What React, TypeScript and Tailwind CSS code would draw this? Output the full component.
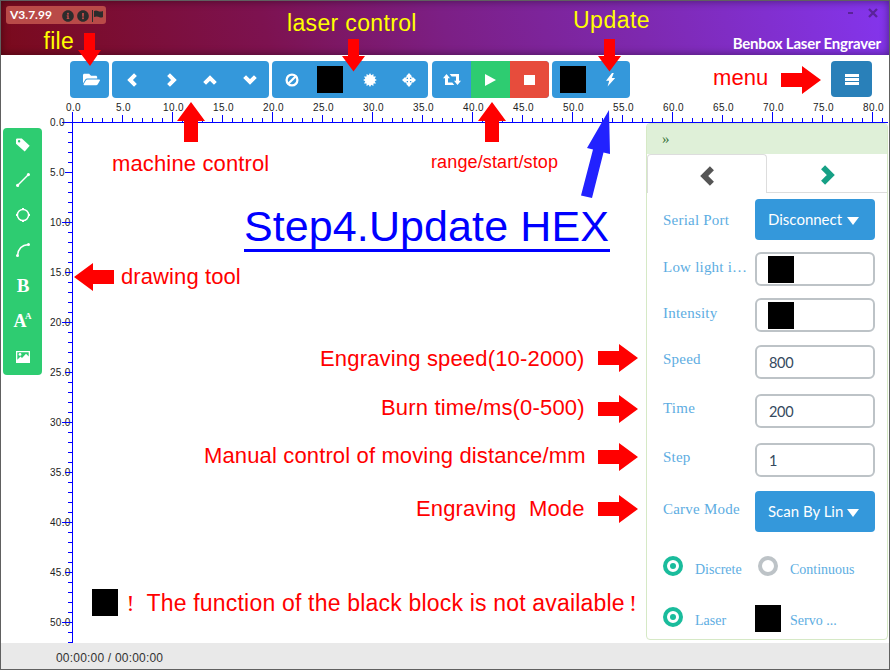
import React from 'react';
import { FaFolderOpen, FaInfoCircle, FaExclamationCircle } from 'react-icons/fa';

const majors = Array.from({ length: 17 }, (_, i) => i * 5);
const vMajors = Array.from({ length: 11 }, (_, i) => i * 5);

function Group({ children, className = '' }: { children: React.ReactNode; className?: string }) {
  return <div className={`flex h-[37px] overflow-hidden rounded-[4px] bg-[#3498db] ${className}`}>{children}</div>;
}
function Btn({ children, className = '' }: { children: React.ReactNode; className?: string }) {
  return <button className={`flex h-[37px] w-[39px] items-center justify-center text-white ${className}`}>{children}</button>;
}
const Block = () => <span className="block h-[27px] w-[26px] shrink-0 bg-black" />;

// One heavy chevron, turned clockwise by `turn` degrees from pointing left.
const Chevron = ({ turn, w = 14 }: { turn: number; w?: number }) => (
  <svg width={w} height={w} viewBox="0 0 13 13" fill="none" stroke="currentColor" strokeWidth="3.7">
    <path d="M9.700 1.500 4.700 6.500l5 5" transform={`rotate(${turn} 6.5 6.5)`} />
  </svg>
);

const Burst = () => (
  <svg width="14" height="14" viewBox="-7 -7 14 14" fill="#fff">
    <polygon points={Array.from({ length: 24 }, (_, i) => {
      const a = (i * Math.PI) / 12;
      const r = i % 2 ? 4.9 : 6.9;
      return `${(Math.sin(a) * r).toFixed(2)},${(-Math.cos(a) * r).toFixed(2)}`;
    }).join(' ')} />
  </svg>
);
const Ban = () => (
  <svg width="14" height="14" viewBox="-7 -7 14 14" fill="none" stroke="#fff" strokeWidth="2.300">
    <circle r="5.400" /><path d="M-3.800 3.800 3.800-3.800" />
  </svg>
);
const Target = () => (
  <svg width="14" height="14" viewBox="-7 -7 14 14">
    <g fill="#fff">
      <path d="M0-7 3.200-3.600H-3.200ZM0 7 3.200 3.600H-3.200ZM-7 0-3.600-3.200V3.200ZM7 0 3.600-3.200V3.200Z" />
      <path d="M0-5.800 5.800 0 0 5.800-5.800 0Z" />
    </g>
    <g fill="#3498db">
      <path d="M-2.300-2.300h1.300v1.300h-1.300zM1-2.300h1.300v1.300H1zM-2.300 1h1.300v1.300h-1.300zM1 1h1.300v1.300H1z" />
    </g>
  </svg>
);
const Repeat = () => (
  <svg width="18" height="11" viewBox="0 0 18 11" fill="#fff">
    <path d="M0 4.300 3.500 0 7 4.300H5V8.400h4.300l2 2.600H2V4.300ZM18 6.700 14.500 11 11 6.700h2V2.600H8.700L6.700 0H16v6.700Z" />
  </svg>
);
const Bolt = () => (
  <svg width="11" height="14" viewBox="0 0 11 14" fill="#fff"><path d="M7 0 1 7.800h3.200L2.600 13.500 10.200 5H6.800L8.800 0z" /></svg>
);
const TextSize = () => (
  <span className="flex items-start font-['Liberation_Serif',serif] font-bold leading-none">
    <span className="text-[18px] tracking-[-1.500px]">A</span><span className="text-[9px]">A</span>
  </span>
);
const Picture = () => (
  <svg width="14" height="12" viewBox="0 0 14 12" className="mt-[2px]">
    <path fill="#fff" fillRule="evenodd" d="M0 0h14v12H0ZM1.300 1.300v7.500L4.500 5.500 6 7l4-4.200 2.700 2.800V1.300Z" />
    <circle cx="4" cy="3.400" r="1.400" fill="#fff" />
  </svg>
);
const toolIcons = [
  <svg width="14" height="14" viewBox="0 0 14 14"><path fill="#fff" fillRule="evenodd" d="M.8.500H5.800l7.900 7.300-5 5.700L0 5.800V1.300ZM3.100 2a1.200 1.200 0 1 0 .01 2.400A1.200 1.200 0 0 0 3.100 2Z" /></svg>,
  <svg width="14" height="14" viewBox="0 0 14 14" stroke="#fff" strokeWidth="1.400" fill="#fff"><path d="M1.500 12.500l11-11" /><circle cx="1.600" cy="12.400" r=".9" /><circle cx="12.400" cy="1.600" r=".9" /></svg>,
  <svg width="14" height="14" viewBox="0 0 14 14" stroke="#fff" fill="none"><circle cx="7" cy="7" r="5.600" strokeWidth="1.500" /><path d="M7 0v2M7 12v2M0 7h2M12 7h2" strokeWidth="2" /></svg>,
  <svg width="14" height="14" viewBox="0 0 14 14" stroke="#fff" fill="none" strokeWidth="1.400"><path d="M1.500 12.500C2 6 6 2 12.500 1.500" /><circle cx="1.500" cy="12.500" r=".8" /><circle cx="12.500" cy="1.500" r=".8" /></svg>,
  <span className="font-['Liberation_Serif',serif] text-[19px] font-bold leading-none tracking-[-1px]">B</span>,
  <TextSize />,
  <Picture />,
];

const Label = ({ children, className = '' }: { children: React.ReactNode; className?: string }) => (
  <span className={`block w-[92px] shrink-0 whitespace-nowrap font-['Liberation_Serif',serif] text-[15px] leading-5 tracking-[0.22px] text-[#5dade2] ${className}`}>{children}</span>
);
const Option = ({ children, className = '' }: { children: React.ReactNode; className?: string }) => (
  <span className={`block shrink-0 whitespace-nowrap font-['Liberation_Serif',serif] text-[14px] leading-5 text-[#5dade2] ${className}`}>{children}</span>
);
function Select({ text }: { text: string }) {
  return (
    <button className="flex h-[41px] w-[120px] items-center justify-between rounded-[4px] bg-[#3498db] pl-[13px] pr-4 font-[Lato,sans-serif] text-[15px] text-white">
      <span className="whitespace-nowrap">{text}</span>
      <svg width="12" height="8" viewBox="0 0 12 8" fill="#fff" className="mt-0.5"><path d="M0 0h12L6 8z" /></svg>
    </button>
  );
}
function Field({ value }: { value?: string }) {
  return (
    <div className="flex h-[34px] w-[120px] items-center rounded-[6px] border-2 border-[#bdc3c7] pl-[11px] font-[Lato,sans-serif] text-[14.500px] tracking-[-0.3px] text-[#34495e]">
      {value === undefined ? <Block /> : <span className="pl-px pt-px">{value}</span>}
    </div>
  );
}
function Radio({ on = false }: { on?: boolean }) {
  return on ? (
    <span className="flex size-5 shrink-0 items-center justify-center rounded-full border-4 border-[#1abc9c]"><span className="size-[6px] rounded-full bg-[#1abc9c]" /></span>
  ) : <span className="block size-5 shrink-0 rounded-full border-4 border-[#bdc3c7]" />;
}

function HRuler() {
  return (
    <div className="relative h-[25px] shrink-0">
      <svg width="888" height="25" className="absolute left-0 top-0" shapeRendering="crispEdges">
        <path d="M61 24.500H887" stroke="#0000ff" />
        {Array.from({ length: 82 }, (_, i) => (
          <rect key={i} x={71 + i * 10} y={i % 10 === 0 ? 14 : i % 5 === 0 ? 17 : 20} width="1" height={i % 10 === 0 ? 10 : i % 5 === 0 ? 7 : 4} fill="#0000ff" />
        ))}
      </svg>
      {majors.map((n) => (
        <span key={n} style={{ left: 52.5 + n * 10 }} className="absolute top-[4px] w-10 text-center font-['Liberation_Sans',Arial,sans-serif] text-[10px] leading-3 tracking-[0.4px] text-[#222]">{n.toFixed(1)}</span>
      ))}
    </div>
  );
}

function VRuler() {
  return (
    <div className="relative h-[520px] w-[31px]">
      {vMajors.map((n) => (
        <span key={n} style={{ top: n * 10 - 6 }} className="absolute left-[8px] font-['Liberation_Sans',Arial,sans-serif] text-[10px] leading-3 tracking-[0.3px] text-[#222]">{n.toFixed(1)}</span>
      ))}
      <svg width="31" height="520" className="absolute left-0 top-0" shapeRendering="crispEdges" fill="#0000ff">
        <rect x="30" y="0" width="1" height="520" />
        {Array.from({ length: 52 }, (_, k) => k + 1).map((i) => {
          const w = i % 10 === 0 ? 10 : i % 5 === 0 ? 7 : 4;
          return <rect key={i} x={30 - w} y={i * 10 - 1} width={w} height="1" />;
        })}
      </svg>
    </div>
  );
}

// text, left, top, font size, letter spacing, colour
const notes: [string, number, number, number, number, string][] = [
  ['file', 43.5, 28, 23, 0.3, '#ffff00'],
  ['laser control', 287, 10, 23, 0.35, '#ffff00'],
  ['Update', 573, 7, 23, 0.5, '#ffff00'],
  ['menu', 713, 65, 22, 0.1, '#ff0000'],
  ['machine control', 112, 151, 22, 0.14, '#ff0000'],
  ['range/start/stop', 431, 149, 18, 0.13, '#ff0000'],
  ['drawing tool', 121, 264, 22, 0.1, '#ff0000'],
  ['Engraving speed(10-2000)', 320, 346, 22, 0.17, '#ff0000'],
  ['Burn time/ms(0-500)', 381, 395, 22, 0.17, '#ff0000'],
  ['Manual control of moving distance/mm', 204, 443, 22, 0.14, '#ff0000'],
  ['Engraving  Mode', 416, 496, 22, 0.15, '#ff0000'],
  ['The function of the black block is not available', 146.5, 590, 23, 0.19, '#ff0000'],
];

function Annotations() {
  return (
    <div className="pointer-events-none absolute -left-px -top-px h-[670px] w-[890px]">
      <svg width="890" height="670" className="absolute left-0 top-0">
        <g fill="#ff0000">
          <path d="M84 33h11v17h6L90 66 78 50h6z" />
          <path d="M348 39h11v17h6l-11.500 15.500L342 56h6z" />
          <path d="M604 39h11v17h6l-11.500 15.500L598 56h6z" />
          <path d="M191 102l14 19h-7v21h-14v-21h-7z" />
          <path d="M492 102l14 19h-7v21h-14v-21h-7z" />
          <path d="M74 277l19-14v7h21v14H93v7z" />
          <path d="M781 73h21v-7l19 14-19 14v-7h-21z" />
          {[358, 409, 457, 509].map((y) => (
            <path key={y} transform={`translate(598 ${y})`} d="M0-7h21v-7l19 14-19 14V7H0z" />
          ))}
        </g>
        <path d="M609 110l1 44-6.500-1.500-11.500 45.500-11-2.500 12-46-6-1.500z" fill="#2222ff" />
      </svg>
      {notes.map(([t, x, y, s, ls, c]) => (
        <span key={t} style={{ left: x, top: y, fontSize: s, letterSpacing: ls, color: c }} className="absolute whitespace-pre font-['Liberation_Sans',Arial,sans-serif] leading-[26px]">{t}</span>
      ))}
      <span className="absolute left-[126.500px] top-[590px] font-['Liberation_Serif',serif] text-[24px] leading-[26px] text-[#ff0000]">!</span>
      <span className="absolute left-[629px] top-[590px] font-['Liberation_Serif',serif] text-[24px] leading-[26px] text-[#ff0000]">!</span>
      <span className="absolute left-[244px] top-[201px] h-[51px] w-[366px] whitespace-nowrap border-b-[3px] border-[#0000ff] font-['Liberation_Sans',Arial,sans-serif] text-[43px] leading-[50px] tracking-[0.1px] text-[#0000ff]">Step4.Update HEX</span>
      <span className="absolute left-[92px] top-[589px]"><Block /></span>
    </div>
  );
}

export default function App() {
  return (
    <div className="relative flex h-[670px] w-[890px] flex-col overflow-hidden border border-[#606060] bg-white">
      <header className="flex h-[54px] shrink-0 items-start justify-between bg-[linear-gradient(75deg,#7a0a1c_0%,#7d1250_30%,#7c1f85_50%,#7e29b0_72%,#8435ee_100%)] shadow-[inset_0_0_8px_rgba(0,0,0,0.45)]">
        <div className="ml-[5px] mt-[5px] flex h-[18px] w-[100px] items-center rounded-[3px] bg-[#b94a48] pl-1 text-[#2c2c2c]">
          <span className="w-[52px] font-[Lato,sans-serif] text-[12px] font-bold leading-none text-white">V3.7.99</span>
          <FaInfoCircle size={12} className="mt-0.5" />
          <FaExclamationCircle size={12} className="ml-[3px] mt-0.5" />
          <svg width="11" height="12" viewBox="0 0 11 12" className="ml-[3px] mt-0.5" fill="currentColor"><path d="M0 0h1v12H0zM2 1q2-1 4 0t5 0v6q-2 1-4 0T2 7z" /></svg>
        </div>
        <div className="mr-[8px] flex flex-col items-end">
          <div className="mr-[3px] flex h-[24px] items-center gap-[15px] text-[#5a2399]">
            <span className="h-[2px] w-[5px] bg-current" />
            <svg width="10" height="10" viewBox="0 0 10 10" stroke="currentColor" strokeWidth="2.300"><path d="M1 1l8 8M9 1L1 9" /></svg>
          </div>
          <span className="mt-[9px] font-[Lato,sans-serif] text-[15px] font-bold leading-[18px] tracking-[-0.2px] text-white">Benbox Laser Engraver</span>
        </div>
      </header>

      <nav className="flex h-[43px] shrink-0 items-start pl-[69px] pr-[17px] pt-[6px]">
        <div className="flex gap-[3px]">
          <Group><Btn><FaFolderOpen size={17} className="ml-1" /></Btn></Group>
          <Group className="pr-px">
            <Btn><Chevron turn={0} /></Btn><Btn className="pl-[2px]"><Chevron turn={180} /></Btn>
            <Btn><Chevron turn={90} /></Btn><Btn className="pl-[2px]"><Chevron turn={270} /></Btn>
          </Group>
          <Group className="mr-px"><Btn><Ban /></Btn><Btn className="pr-[2px]"><Block /></Btn><Btn><Burst /></Btn><Btn><Target /></Btn></Group>
          <Group>
            <Btn><Repeat /></Btn>
            <Btn className="bg-[#2ecc71]"><svg width="11" height="12" fill="#fff"><path d="M0 0 11 6 0 12z" /></svg></Btn>
            <Btn className="bg-[#e74c3c]"><svg width="11" height="10" fill="#fff"><rect width="11" height="10" /></svg></Btn>
          </Group>
          <Group><Btn className="pl-[3px]"><Block /></Btn><Btn><Bolt /></Btn></Group>
        </div>
        <button className="ml-auto flex h-9 w-[41px] items-center justify-center rounded-[4px] bg-[#2980b9]">
          <svg width="14" height="11" fill="#fff"><path d="M0 0h14v3H0zM0 4h14v3H0zM0 8h14v3H0z" /></svg>
        </button>
      </nav>

      <HRuler />

      <main className="flex h-[520px] shrink-0">
        <aside className="ml-[2px] mt-[5px] flex h-[247px] w-[39px] flex-col items-center rounded-[4px] bg-[#2ecc71] text-white">
          {toolIcons.map((icon, i) => <button key={i} className="flex h-[35.2px] w-full items-center justify-center pb-[2px]">{icon}</button>)}
        </aside>
        <VRuler />
        <section className="ml-auto mr-px h-[517px] w-[242px] rounded-[4px] border border-[#d6e9c6] bg-white">
          <div className="flex h-[30px] items-center rounded-t-[3px] bg-[#dff0d8] pl-[15px] pt-px font-['Liberation_Serif',serif] text-[15px] text-[#3c763d]">»</div>
          <div className="flex h-[39px]">
            <div className="flex w-[120px] items-center justify-center rounded-t-[4px] border border-b-0 border-[#ddd] pt-[3px] text-[#555]"><Chevron turn={0} w={20} /></div>
            <div className="flex flex-1 items-center justify-center border-b border-[#ddd] pl-px pt-1 text-[#16a085]"><Chevron turn={180} w={20} /></div>
          </div>
          <div className="flex flex-col pl-4 pt-[6px]">
            <div className="flex h-[53px] items-start"><Label className="pt-[11px]">Serial Port</Label><Select text="Disconnect" /></div>
            <div className="flex h-[46px] items-start"><Label className="pt-[5px]">Low light i…</Label><Field /></div>
            <div className="flex h-[47px] items-start"><Label className="pt-[5px]">Intensity</Label><Field /></div>
            <div className="flex h-[49px] items-start"><Label className="pt-1">Speed</Label><Field value="800" /></div>
            <div className="flex h-[49px] items-start"><Label className="pt-1">Time</Label><Field value="200" /></div>
            <div className="flex h-[48px] items-start"><Label className="pt-1">Step</Label><Field value="1" /></div>
            <div className="flex h-[65px] items-start"><Label className="pt-2">Carve Mode</Label><Select text="Scan By Lin" /></div>
            <div className="flex h-[49px] items-start">
              <Radio on /><Option className="ml-3 w-[63px] pt-1">Discrete</Option>
              <Radio /><Option className="ml-3 pt-1">Continuous</Option>
            </div>
            <div className="flex items-start">
              <span className="pt-[2px]"><Radio on /></span><Option className="ml-3 w-[60px] pt-[6px]">Laser</Option>
              <Block /><Option className="ml-[9px] pt-[6px]">Servo ...</Option>
            </div>
          </div>
        </section>
      </main>

      <footer className="flex flex-1 items-center bg-[#e9e9e9] pl-[55px] pt-[3px] font-['Liberation_Sans',Arial,sans-serif] text-[12px] tracking-[0.2px] text-[#333]">00:00:00 / 00:00:00</footer>
      <Annotations />
    </div>
  );
}
